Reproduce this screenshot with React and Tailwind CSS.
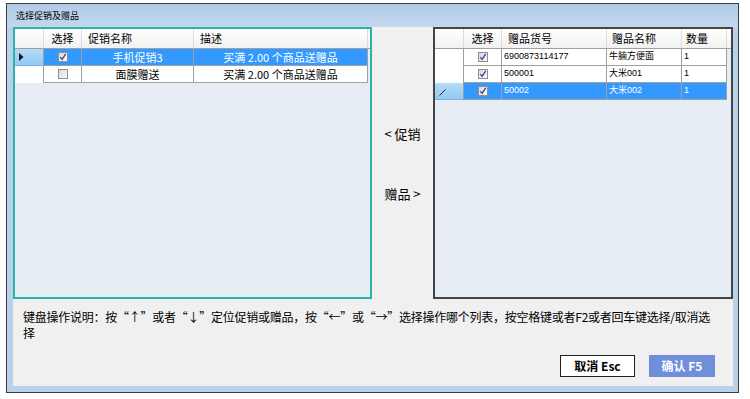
import React from "react";

const cjk = "font-['Noto_Sans_CJK_SC',sans-serif]";

function Check({ checked }) {
  return (
    <span className="inline-flex h-[10px] w-[10px] items-center justify-center border border-[#8e8e8e] bg-gradient-to-br from-[#d9d9d9] to-[#fbfbfb]">
      {checked ? (
        <svg width="8" height="8" viewBox="0 0 8 8">
          <path d="M1.3 4.2 L3.1 6.3 L6.7 0.8" fill="none" stroke="#2d4aa0" strokeWidth="1.3" />
        </svg>
      ) : null}
    </span>
  );
}

function RowMark({ kind }) {
  if (kind === "arrow") {
    return (
      <svg width="5" height="8" viewBox="0 0 5 8" className="ml-[4px]">
        <path d="M0 0 L4.5 4 L0 8 Z" fill="#111" />
      </svg>
    );
  }
  if (kind === "edit") {
    return (
      <svg width="9" height="9" viewBox="0 0 9 9" className="ml-[3px] mt-[3px]">
        <path d="M1.5 7.5 L7.5 1.5" stroke="#222" strokeWidth="1" />
        <path d="M0.5 8.5 L1.5 7.5" stroke="#888" strokeWidth="1" />
      </svg>
    );
  }
  return null;
}

function Grid({ columns, rows }) {
  return (
    <div className={`flex flex-col ${cjk}`}>
      <div className="flex h-[20px] border-b border-[#a0a0a0] bg-gradient-to-b from-[#ffffff] to-[#f1f1f1] text-[11px] text-black">
        <div className="h-full border-r border-[#dcdcdc]" style={{ width: columns[0].w }} />
        {columns.slice(1).map((c, i) => (
          <div
            key={i}
            className={`flex h-full items-center border-r border-[#dcdcdc] ${c.headAlign === "center" ? "justify-center" : "justify-start"}`}
            style={{ width: c.w, paddingLeft: c.headPad || 0 }}
          >
            {c.title}
          </div>
        ))}
      </div>
      {rows.map((r, ri) => (
        <div key={ri} className={`flex h-[17px] ${r.selected ? "text-white" : "text-black"}`}>
          <div
            className={`flex h-full items-center border-r border-[#a0a0a0] ${r.selected ? "bg-gradient-to-b from-[#b4dcf9] to-[#93c9f2] border-b border-b-[#7fb3e0]" : "bg-white"}`}
            style={{ width: columns[0].w }}
          >
            <RowMark kind={r.mark} />
          </div>
          {columns.slice(1).map((c, i) => {
            const v = r.cells[i];
            return (
              <div
                key={i}
                className={`flex h-full items-center border-r border-b border-[#a0a0a0] ${r.selected ? "bg-[#3399ff]" : "bg-white"} ${c.align === "center" ? "justify-center" : "justify-start pl-[2px]"} ${c.cls || ""}`}
                style={{ width: c.w }}
              >
                {c.check ? <Check checked={v} /> : v}
              </div>
            );
          })}
        </div>
      ))}
    </div>
  );
}

const leftCols = [
  { w: 29 },
  { w: 38, title: "选择", headAlign: "center", align: "center", check: true },
  { w: 112, title: "促销名称", headPad: 6, align: "center", cls: "text-[11px]" },
  { w: 174, title: "描述", headPad: 6, align: "center", cls: "text-[11px]" },
];

const leftRows = [
  { selected: true, mark: "arrow", cells: [true, "手机促销3", "买满 2.00 个商品送赠品"] },
  { selected: false, cells: [false, "面膜赠送", "买满 2.00 个商品送赠品"] },
];

const rightData = "text-[9px] font-['Liberation_Sans','Noto_Sans_CJK_SC',sans-serif]";

const rightCols = [
  { w: 29 },
  { w: 38, title: "选择", headAlign: "center", align: "center", check: true },
  { w: 105, title: "赠品货号", headPad: 6, cls: rightData },
  { w: 75, title: "赠品名称", headPad: 5, cls: rightData },
  { w: 45, title: "数量", headPad: 4, cls: rightData },
];

const rightRows = [
  { cells: [true, "6900873114177", "牛腩方便面", "1"] },
  { cells: [true, "500001", "大米001", "1"] },
  { selected: true, mark: "edit", cells: [true, "50002", "大米002", "1"] },
];

export default function App() {
  return (
    <div className={`h-[399px] w-[750px] bg-white pl-[6px] pt-[3px] ${cjk}`}>
      <div className="flex h-[390px] w-[733px] flex-col border border-[#3c3c3c] bg-[#b9d1ea] pb-[6px] pl-[6px] pr-[5px]">
        <div className="flex h-[23px] items-center bg-gradient-to-b from-[#b3cbe7] to-[#c3d7ee] -ml-[6px] -mr-[5px] pl-[9px] text-[9px] text-black">
          选择促销及赠品
        </div>
        <div className="flex flex-1 flex-col bg-[#f0f0f0]">
          <div className="flex h-[272px]">
            <div className="w-[359px] border-2 border-[#2bb3aa] bg-[#e6edf5]">
              <Grid columns={leftCols} rows={leftRows} />
            </div>
            <div className="flex w-[61px] flex-col items-center pt-[98px] text-[13px] text-black">
              <div className="h-[18px] leading-[18px]">&lt; 促销</div>
              <div className="mt-[42px] h-[18px] leading-[18px]">赠品 &gt;</div>
            </div>
            <div className="flex-1 border-2 border-[#454545] bg-[#e6edf5]">
              <Grid columns={rightCols} rows={rightRows} />
            </div>
          </div>
          <div className="mt-[10px] pl-[10px] text-[12px] leading-[16px] tracking-[-0.25px] text-black">
            <div className="whitespace-nowrap">
              键盘操作说明：按“↑”或者“↓”定位促销或赠品，按“←”或“→”选择操作哪个列表，按空格键或者F2或者回车键选择/取消选
            </div>
            <div>择</div>
          </div>
          <div className="mt-[14px] flex justify-end gap-[14px] pr-[18px]">
            <button className="flex h-[22px] w-[75px] items-center justify-center border border-[#1f1f1f] bg-white text-[12px] font-bold text-black">
              取消 Esc
            </button>
            <button className="flex h-[22px] w-[66px] items-center justify-center bg-[#6f8fdb] text-[12px] font-bold text-white">
              确认 F5
            </button>
          </div>
        </div>
      </div>
    </div>
  );
}
